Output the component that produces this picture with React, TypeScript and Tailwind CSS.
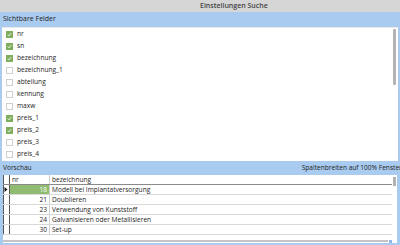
import React from "react";

const fields: [string, boolean][] = [
  ["nr", true],
  ["sn", true],
  ["bezeichnung", true],
  ["bezeichnung_1", false],
  ["abteilung", false],
  ["kennung", false],
  ["maxw", false],
  ["preis_1", true],
  ["preis_2", true],
  ["preis_3", false],
  ["preis_4", false],
];

const rows: [number, string][] = [
  [18, "Modell bei Implantatversorgung"],
  [21, "Doublieren"],
  [23, "Verwendung von Kunststoff"],
  [24, "Galvanisieren oder Metallisieren"],
  [30, "Set-up"],
];

function Check({ on }: { on: boolean }) {
  if (!on)
    return <span className="h-[7px] w-[7px] shrink-0 border border-[#cfcfcf] bg-white" />;
  return (
    <span className="flex h-[7px] w-[7px] shrink-0 items-center justify-center bg-[#7fae5c]">
      <svg width="5" height="5" viewBox="0 0 5 5">
        <path d="M0.8 2.6 L2 3.8 L4.2 1.2" fill="none" stroke="#fff" strokeWidth="0.9" />
      </svg>
    </span>
  );
}

export default function App() {
  return (
    <div
      className="flex h-[245px] w-[400px] flex-col overflow-hidden bg-[#a9cbf0] text-[6.6px] text-[#1e1e1e]"
      style={{ fontFamily: '"Open Sans", "DejaVu Sans", sans-serif' }}
    >
      {/* title bar */}
      <div className="flex h-[12px] shrink-0 items-center bg-[#d6d6d6] pl-[200px] text-[7px] font-semibold text-[#444]">
        Einstellungen Suche
      </div>

      <div className="flex h-[15px] shrink-0 items-center px-[3px] text-[7px]">Sichtbare Felder</div>

      {/* field list */}
      <div className="mx-[2px] flex h-[134px] shrink-0 border-t border-[#e8e8e8] bg-white">
        <div className="flex flex-1 flex-col">
          {fields.map(([name, on]) => (
            <div key={name} className="flex h-[12px] items-center gap-[4px] pl-[4px]">
              <Check on={on} />
              <span>{name}</span>
            </div>
          ))}
        </div>
        <div className="flex w-[5px] flex-col pt-[1px]">
          <div className="h-[56px] w-[3px] rounded-[1px] bg-[#b3b3b3]" />
        </div>
      </div>

      <div className="flex h-[14px] shrink-0 items-center overflow-hidden whitespace-nowrap pl-[3px]">
        <span>Vorschau</span>
        <span className="ml-[270px]">Spaltenbreiten auf 100% Fensterbreite</span>
      </div>

      {/* preview grid */}
      <div className="mx-[3px] flex h-[68px] shrink-0 flex-col bg-white">
        <div className="flex flex-1">
          <div className="flex flex-1 flex-col">
            <div className="flex h-[10px] border-b border-[#8a8a8a]">
              <div className="w-[7px] border-x border-[#555]" />
              <div className="flex w-[40px] items-center border-r border-[#d0d0d0] pl-[2px]">nr</div>
              <div className="flex flex-1 items-center pl-[2px]">bezeichnung</div>
            </div>
            {rows.map(([nr, text], i) => (
              <div key={nr} className="flex h-[10px] border-b border-[#d8d8d8]">
                <div className="flex w-[7px] items-center border-x border-[#555]">
                  {i === 0 && (
                    <svg width="4" height="5" viewBox="0 0 4 5">
                      <path d="M0.5 0 L3.5 2.5 L0.5 5 Z" fill="#111" />
                    </svg>
                  )}
                </div>
                <div
                  className={
                    i === 0
                      ? "flex w-[40px] items-center justify-end border-r border-[#d0d0d0] bg-[#8fbc70] pr-[2px] text-white"
                      : "flex w-[40px] items-center justify-end border-r border-[#d0d0d0] pr-[2px]"
                  }
                >
                  {nr}
                </div>
                <div className="flex flex-1 items-center pl-[2px]">{text}</div>
              </div>
            ))}
          </div>
          <div className="flex w-[5px] flex-col items-center pt-[2px]">
            <div className="h-[9px] w-[3px] bg-[#b3b3b3]" />
          </div>
        </div>
        <div className="flex h-[4px] items-center pr-[5px]">
          <div className="h-[2px] flex-1 bg-[#c4c4c4]" />
          <div className="ml-[1px] h-[3px] w-[3px] bg-[#8fb8e8]" />
        </div>
      </div>
    </div>
  );
}
